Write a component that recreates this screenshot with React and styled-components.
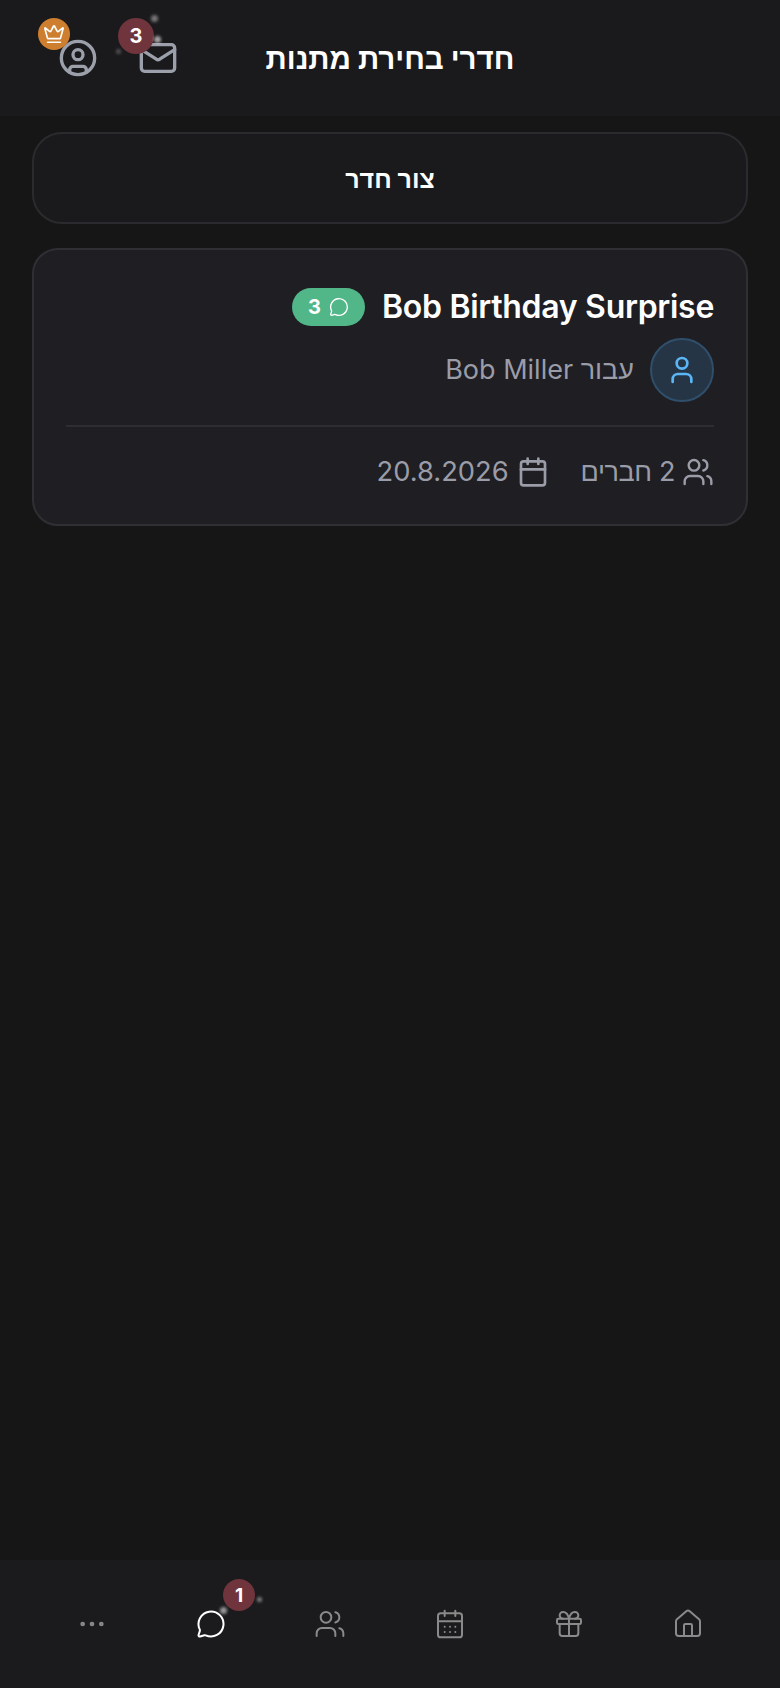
import React from 'react';
import styled, { createGlobalStyle } from 'styled-components';
import { CircleUser, Mail, Crown, MessageCircle, Users, Calendar, CalendarDays, Gift, House, Ellipsis, User } from 'lucide-react';

const Global = createGlobalStyle`
  html, body { margin: 0; padding: 0; background: #161616; }
  body { font-family: Inter, "Liberation Sans", sans-serif; }
  * { box-sizing: border-box; }
`;

const Page = styled.div`
  width: 780px; height: 1688px; display: flex; flex-direction: column; background: #161616;
`;
const Header = styled.header`
  height: 116px; background: #1a1a1c; display: grid; grid-template-columns: 1fr auto 1fr;
  align-items: center; padding: 0 58px; direction: ltr;
`;
const HeaderIcons = styled.div`
  display: flex; gap: 40px; align-items: center; color: #9ca0aa;
`;
const IconWrap = styled.div`
  position: relative; width: 40px; height: 40px; display: flex;
`;
const Title = styled.h1`
  margin: 2px 0 0; font-size: 29.5px; font-weight: 700; color: #fff; direction: rtl; line-height: 1; white-space: nowrap;
`;
const Badge = styled.span`
  position: absolute; left: ${p => p.$left}px; top: ${p => p.$top}px; width: ${p => p.$size}px; height: ${p => p.$size}px;
  border-radius: 50%; background: ${p => p.$bg}; color: #fff; display: flex; align-items: center; justify-content: center;
  font-size: ${p => p.$font || 20}px; font-weight: 700;
`;
const Spark = styled.i`
  position: absolute; left: ${p => p.$x}px; top: ${p => p.$y}px; width: ${p => p.$s}px; height: ${p => p.$s}px;
  border-radius: 50%; background: #fff; opacity: ${p => p.$o}; filter: blur(1.5px);
`;
const Main = styled.main`
  flex: 1; padding: 16px 32px; display: flex; flex-direction: column; gap: 24px; direction: rtl;
`;
const CreateButton = styled.button`
  height: 92px; border-radius: 30px; background: #1a1a1d; border: 2px solid #2b2b2f; color: #fff;
  font: 700 25px Inter, "Liberation Sans", sans-serif; padding: 2px 0 0;
`;
const Card = styled.article`
  height: 278px; border-radius: 26px; background: #1e1e23; border: 2px solid #2f2f34; padding: 38px 32px 0;
  display: flex; flex-direction: column;
`;
const TitleRow = styled.div`
  display: flex; align-items: center; gap: 17px; height: 38px;
`;
const CardTitle = styled.h2`
  margin: 0; font-size: 32px; font-weight: 600; letter-spacing: -0.3px; color: #fff; line-height: 38px; white-space: nowrap; direction: ltr;
`;
const Pill = styled.span`
  height: 38px; width: 73px; border-radius: 19px; background: #52b788; color: #fff; display: flex; align-items: center;
  justify-content: center; gap: 8px; font-size: 20px; font-weight: 700;
`;
const ForRow = styled.div`
  display: flex; align-items: center; gap: 16px; margin-top: 12px;
`;
const Avatar = styled.div`
  width: 64px; height: 64px; border-radius: 50%; background: #263545; border: 2px solid #2f4f6b; color: #5ab6f5;
  display: flex; align-items: center; justify-content: center;
`;
const Muted = styled.span`
  font-size: ${p => p.$size || 27}px; letter-spacing: ${p => p.$track || 0}px; color: #9a9ca8; line-height: 34px; white-space: nowrap;
`;
const Divider = styled.hr`
  margin: 23px 0 0; border: 0; height: 2px; background: #2d2d32; width: 100%;
`;
const MetaRow = styled.div`
  display: flex; align-items: center; gap: 32px; margin-top: 28px;
`;
const Meta = styled.div`
  display: flex; align-items: center; gap: ${p => p.$gap}px; color: #9a9ca8;
`;
const Nav = styled.nav`
  height: 128px; background: #1b1b1d; padding: 0 32px; display: grid; grid-template-columns: repeat(6, 1fr);
  align-items: center; justify-items: center; direction: ltr;
`;
const NavItem = styled.div`
  position: relative; width: 32px; height: 32px; display: flex; align-items: center; justify-content: center;
  color: ${p => p.$active ? '#fff' : '#8b8a8a'};
`;

export default function App() {
  return (
    <Page>
      <Global />
      <Header>
        <HeaderIcons>
          <IconWrap>
            <CircleUser size={40} strokeWidth={2} />
            <Badge $left={-20} $top={-20} $size={32} $bg="#cd7f2f"><Crown size={22} strokeWidth={1.8} /></Badge>
          </IconWrap>
          <IconWrap>
            <Mail size={40} strokeWidth={2} />
            <Badge $left={-20} $top={-20} $size={36} $bg="#6f343c">3</Badge>
            <Spark $x={13} $y={-23} $s={7} $o={0.4} />
            <Spark $x={16} $y={-2} $s={7} $o={0.6} />
            <Spark $x={-22} $y={11} $s={5} $o={0.25} />
          </IconWrap>
        </HeaderIcons>
        <Title>חדרי בחירת מתנות</Title>
        <span />
      </Header>
      <Main>
        <CreateButton>צור חדר</CreateButton>
        <Card>
          <TitleRow>
            <CardTitle>Bob Birthday Surprise</CardTitle>
            <Pill><MessageCircle size={20} strokeWidth={1.6} />3</Pill>
          </TitleRow>
          <ForRow>
            <Avatar><User size={32} strokeWidth={2} /></Avatar>
            <Muted>עבור Bob Miller</Muted>
          </ForRow>
          <Divider />
          <MetaRow>
            <Meta $gap={7}><Users size={32} strokeWidth={1.8} /><Muted $track={-0.4}>2 חברים</Muted></Meta>
            <Meta $gap={8}><Calendar size={32} strokeWidth={2} /><Muted $size={27.3}>20.8.2026</Muted></Meta>
          </MetaRow>
        </Card>
      </Main>
      <Nav>
        <NavItem><Ellipsis size={32} strokeWidth={1.5} /></NavItem>
        <NavItem $active>
          <MessageCircle size={30} strokeWidth={1.6} />
          <Badge $left={28} $top={-29} $size={32} $bg="#6f343c" $font={19}>1</Badge>
          <Spark $x={25} $y={-1} $s={7} $o={0.55} />
          <Spark $x={62} $y={-11} $s={5} $o={0.45} />
        </NavItem>
        <NavItem><Users size={32} strokeWidth={1.5} /></NavItem>
        <NavItem><CalendarDays size={32} strokeWidth={1.5} /></NavItem>
        <NavItem><Gift size={32} strokeWidth={1.5} /></NavItem>
        <NavItem><House size={32} strokeWidth={1.5} /></NavItem>
      </Nav>
    </Page>
  );
}
